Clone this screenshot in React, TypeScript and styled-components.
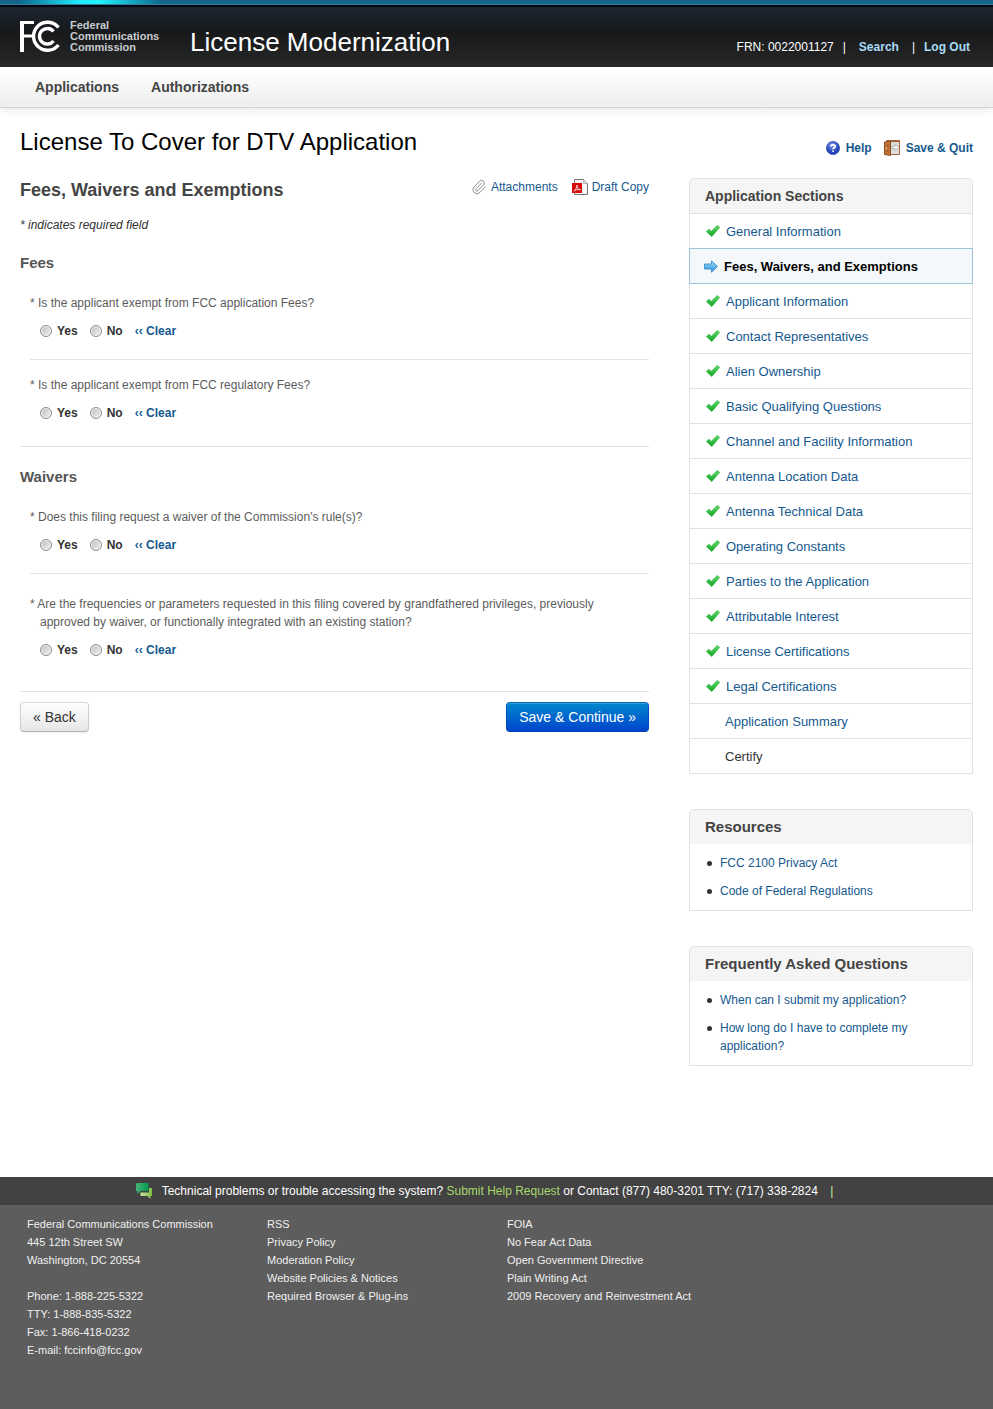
import React from "react";
import styled, { createGlobalStyle } from "styled-components";
import { Paperclip } from "lucide-react";

const GlobalStyle = createGlobalStyle`
  *, *::before, *::after { box-sizing: border-box; }
  body {
    margin: 0;
    background: #fff;
    color: #333;
    font: 12px/18px "Liberation Sans", Arial, sans-serif;
  }
  h1, h2, h3, p, ul, fieldset, legend { margin: 0; padding: 0; }
  fieldset { border: 0; min-width: 0; }
  ul { list-style: none; }
  a { color: #15598f; text-decoration: none; }
  svg { display: block; flex: none; }
`;

const Header = styled.header`
  position: relative;
  display: flex;
  align-items: flex-end;
  height: 67px;
  padding: 0 23px 0 20px;
  border-top: 4px solid #17638a;
  box-shadow: inset 0 1px #3579a3, inset 0 3px #02060f;
  background: linear-gradient(#1c2731, #17191b 45%, #272727);
  color: #fff;
`;

const Glow = styled.div`
  position: absolute;
  top: -4px;
  left: 20px;
  width: 140px;
  height: 4px;
  background: linear-gradient(90deg, #0d6a8e, #1ee9fa 42%, #22f4ff 56%, #0d6a8e);
`;

const LogoLink = styled.a`
  display: flex;
  gap: 10px;
  width: 170px;
  margin-bottom: 14px;
  color: #c9cccf;
  font: bold 11px/11px "Liberation Sans", Arial, sans-serif;
`;

const SiteTitle = styled.div`
  flex: 1;
  margin-bottom: 10px;
  font-size: 26px;
  line-height: 30px;
`;

const Account = styled.div`
  display: flex;
  margin-bottom: 11px;
  gap: 9px;
  a { color: #a9dcf7; font-weight: bold; }
  a:first-of-type { margin: 0 4px; }
`;

const Nav = styled.nav`
  display: flex;
  gap: 32px;
  height: 41px;
  padding: 0 35px;
  border-bottom: 1px solid #d2d2d2;
  box-shadow: 0 2px 8px rgba(0, 0, 0, 0.1);
  background: linear-gradient(#fff, #eee);
  a { color: #444; font-size: 14px; font-weight: bold; line-height: 40px; }
`;

const TitleRow = styled.div`
  display: flex;
  justify-content: space-between;
  align-items: flex-start;
  padding: 20px 20px 21px;
`;

const PageTitle = styled.h1`
  color: #000;
  font-size: 24px;
  font-weight: normal;
  line-height: 28px;
`;

const Actions = styled.div<{ $bold?: boolean }>`
  display: flex;
  align-items: flex-start;
  gap: ${(p) => (p.$bold ? 12 : 14)}px;
  margin-top: ${(p) => (p.$bold ? 11 : 0)}px;
  font-weight: ${(p) => (p.$bold ? "bold" : "normal")};
  a { display: flex; align-items: center; gap: ${(p) => (p.$bold ? 6 : 4)}px; }
`;

const Columns = styled.div`
  display: grid;
  grid-template-columns: minmax(0, 1fr) 284px;
  gap: 40px;
  padding: 0 20px;
`;

const FormHead = styled.div`
  display: flex;
  justify-content: space-between;
  h2 { color: #444; font-size: 18px; line-height: 24px; }
`;

const RequiredNote = styled.p`
  margin: 14px 0 20px;
  font-style: italic;
`;

const Group = styled.section<{ $last?: boolean }>`
  margin-bottom: ${(p) => (p.$last ? 10 : 21)}px;
  padding-bottom: ${(p) => (p.$last ? 32 : 24)}px;
  border-bottom: 1px solid #d7e4ee;
  h3 { margin-bottom: 22px; color: #555; font-size: 15px; line-height: 18px; }
`;

const Question = styled.div<{ $space?: number }>`
  margin-left: 10px;
  padding-top: ${(p) => p.$space ?? 0}px;
  & + & {
    margin-top: 19px;
    border-top: 1px solid #dde6ee;
  }
  legend {
    max-width: 590px;
    padding-left: 10px;
    text-indent: -10px;
    color: #5c5c5c;
  }
`;

const Options = styled.div`
  display: flex;
  align-items: center;
  gap: 12px;
  margin: 10px 0 0 10px;
  font-weight: bold;
  label { display: flex; align-items: center; gap: 5px; }
`;

const Radio = styled.input`
  appearance: none;
  width: 12px;
  height: 12px;
  margin: 0;
  border: 1px solid #8b8d8f;
  border-radius: 50%;
  box-shadow: inset 0 0 0 1px #f6f6f6;
  background: linear-gradient(135deg, #b9bcbe, #f4f4f4);
  &:checked { background: radial-gradient(#245f8d 35%, #eee 45%); }
`;

const ClearButton = styled.button`
  padding: 0;
  border: 0;
  background: none;
  color: #15598f;
  font: inherit;
`;

const ButtonRow = styled.div`
  display: flex;
  justify-content: space-between;
`;

const Button = styled.button<{ $primary?: boolean }>`
  height: 30px;
  padding: 0 12px;
  border: 1px solid;
  border-color: ${(p) => (p.$primary ? "#0667b7 #0450bd #0341b5" : "#dadada #cfcfcf #b3b3b3")};
  border-radius: 4px;
  box-shadow: ${(p) =>
    p.$primary ? "inset 0 1px rgba(255,255,255,0.2)" : "0 1px 2px rgba(0,0,0,0.08)"};
  background: ${(p) =>
    p.$primary ? "linear-gradient(#0088cc, #0044cc)" : "linear-gradient(#fff, #e6e6e6)"};
  color: ${(p) => (p.$primary ? "#fff" : "#333")};
  font: 14px/18px "Liberation Sans", Arial, sans-serif;
`;

const Sidebar = styled.aside`
  display: flex;
  flex-direction: column;
  gap: 35px;
`;

const Panel = styled.section`
  border: 1px solid #e1e1e1;
  border-radius: 5px 5px 0 0;
`;

const PanelTitle = styled.h3<{ $nav?: boolean }>`
  padding: 0 15px;
  border-radius: 4px 4px 0 0;
  background: #f5f5f5;
  color: #444;
  font-size: ${(p) => (p.$nav ? 14 : 15)}px;
  line-height: 34px;
`;

const Step = styled.li<{ $current?: boolean }>`
  display: flex;
  align-items: center;
  gap: 6px;
  height: ${(p) => (p.$current ? 36 : 35)}px;
  margin: ${(p) => (p.$current ? "0 -1px -1px" : 0)};
  padding-left: ${(p) => (p.$current ? 14 : 16)}px;
  border: ${(p) => (p.$current ? "1px solid #9cc5dc" : "0")};
  border-top: 1px solid ${(p) => (p.$current ? "#9cc5dc" : "#e1e1e1")};
  background: ${(p) => (p.$current ? "#f4f8fb" : "none")};
  position: relative;
  z-index: ${(p) => (p.$current ? 1 : 0)};
  font-size: 13px;
  > a, > span { padding-top: 2px; }
  a { color: ${(p) => (p.$current ? "#000" : "#15598f")}; font-weight: ${(p) => (p.$current ? "bold" : "normal")}; }
`;

const StepText = styled.span`
  padding-left: 19px;
`;

const LinkList = styled.ul`
  display: grid;
  gap: 10px;
  padding: 10px 15px;
  li { display: flex; gap: 8px; }
  li::before {
    content: "";
    flex: none;
    width: 5px;
    height: 5px;
    margin: 7px 0 0 2px;
    border-radius: 50%;
    background: #333;
  }
`;

const SupportBar = styled.div`
  display: flex;
  justify-content: center;
  align-items: center;
  gap: 10px;
  height: 28px;
  margin-top: 111px;
  padding-right: 24px;
  background: #424242;
  color: #fff;
  a { color: #a6d86e; }
  span { margin-left: 9px; color: #c5ec9a; }
`;

const Footer = styled.footer`
  display: grid;
  grid-template-columns: 240px 240px 1fr;
  padding: 10px 27px 50px;
  background: #5d5d5d;
  color: #f0f0f0;
  font-size: 11px;
  a { color: inherit; }
  address { font-style: normal; }
  p + p { margin-top: 18px; }
`;

const FccLogo = () => (
  <svg width="40" height="32" viewBox="0 0 40 32" fill="none" stroke="#fff" aria-hidden="true">
    <path d="M2 32V1" strokeWidth="4" />
    <path d="M2 2.500H14M2 16H12" strokeWidth="3" />
    <path d="M38.500 7.500A14 14 0 1 0 38.500 25" strokeWidth="3.400" />
    <path d="M33.500 11.500A7.800 7.800 0 1 0 33.500 21" strokeWidth="3.400" />
  </svg>
);

const HelpIcon = () => (
  <svg width="14" height="14" viewBox="0 0 14 14" aria-hidden="true">
    <defs>
      <radialGradient id="help" cx=".45" cy=".3">
        <stop offset="0" stopColor="#7da0ef" />
        <stop offset="1" stopColor="#2746bb" />
      </radialGradient>
    </defs>
    <circle cx="7" cy="7" r="6.600" fill="url(#help)" stroke="#2a46ae" strokeWidth=".7" />
    <path d="M4.800 5.400C4.900 3.300 9.300 3.300 9.200 5.400C9.200 6.700 7.100 6.700 7.100 8.300M7.100 9.400V11" fill="none" stroke="#fff" strokeWidth="1.700" />
  </svg>
);

const DoorIcon = () => (
  <svg width="16" height="16" viewBox="0 0 16 16" aria-hidden="true">
    <path d="M2.500.5H15.500V14.500H6" fill="#9b5a2d" stroke="#a8683a" />
    <path d="M7 2H15V14H7Z" fill="#dcdcdc" />
    <path d="M.5 2L6.500 1V15.500L.5 14.500Z" fill="#c4763c" stroke="#8e4d20" />
    <path d="M2.200 4L5 3.600V7.400H2.200ZM2.200 9.200H5V13L2.200 12.600Z" fill="#b0642e" />
    <circle cx="2.200" cy="8.300" r=".8" fill="#f5d28c" />
    <path d="M8 6.400H11V4.300L14.600 7.400L11 10.500V8.500H8Z" fill="#fff" stroke="#a2a2a2" strokeWidth=".7" />
  </svg>
);

const PdfIcon = () => (
  <svg width="16" height="16" viewBox="0 0 16 16" aria-hidden="true">
    <path d="M2.500.5H11.500L15.500 4.500V15.500H2.500Z" fill="#f7f7f7" stroke="#777" />
    <path d="M11.500.5V4.500H15.500" fill="#ddd" stroke="#aaa" strokeWidth=".7" />
    <path d="M0 4H10V14H0Z" fill="#d90a0a" />
    <path d="M2 12C4 10.500 5 8 5 6C5.200 9 6.500 10.500 8.500 10.800C6 10.200 4 10.600 2 12Z" fill="none" stroke="#fff" strokeWidth=".8" />
  </svg>
);

const CheckIcon = () => (
  <svg width="14" height="12" viewBox="0 0 14 12" aria-hidden="true">
    <defs>
      <linearGradient id="check" x1="0" y1="0" x2="0" y2="1">
        <stop offset="0" stopColor="#5fdc68" />
        <stop offset="1" stopColor="#12a326" />
      </linearGradient>
    </defs>
    <path d="M.4 6.600L2.900 4.200L5.300 6.300L11.300.4L13.600 2.400L5.800 11.600Z" fill="url(#check)" stroke="#2fb03e" strokeWidth=".7" strokeLinejoin="round" />
  </svg>
);

const ArrowIcon = () => (
  <svg width="14" height="13" viewBox="0 0 14 13" aria-hidden="true">
    <defs>
      <linearGradient id="arrow" x1="0" y1="0" x2="0" y2="1">
        <stop offset="0" stopColor="#a8dcf8" />
        <stop offset="1" stopColor="#2492df" />
      </linearGradient>
    </defs>
    <path d="M.5 4H7.500V.8L13.500 6.500L7.500 12.200V9H.5Z" fill="url(#arrow)" stroke="#398fc9" strokeWidth=".9" strokeLinejoin="round" />
  </svg>
);

const ChatIcon = () => (
  <svg width="16" height="16" viewBox="0 0 16 16" aria-hidden="true">
    <defs>
      <linearGradient id="chat">
        <stop offset="0" stopColor="#46b577" />
        <stop offset="1" stopColor="#009b4e" />
      </linearGradient>
      <linearGradient id="reply">
        <stop offset="0" stopColor="#cde3a0" />
        <stop offset="1" stopColor="#7cbf42" />
      </linearGradient>
    </defs>
    <path d="M13 5H16V13H14.500V16L11.500 13H4.500V9.500H13Z" fill="url(#reply)" />
    <path d="M1 0H11.500L12.500 1V8H4.500L1.500 11V8H0V1Z" fill="url(#chat)" />
  </svg>
);

const YesNo = ({ name, text, space }: { name: string; text: string; space?: number }) => (
  <Question $space={space}>
    <fieldset>
      <legend>* {text}</legend>
      <Options>
        <label><Radio type="radio" name={name} value="yes" />Yes</label>
        <label><Radio type="radio" name={name} value="no" />No</label>
        <ClearButton type="reset">‹‹ Clear</ClearButton>
      </Options>
    </fieldset>
  </Question>
);

const completed = [
  "Applicant Information", "Contact Representatives", "Alien Ownership",
  "Basic Qualifying Questions", "Channel and Facility Information",
  "Antenna Location Data", "Antenna Technical Data", "Operating Constants",
  "Parties to the Application", "Attributable Interest",
  "License Certifications", "Legal Certifications",
];

const DoneStep = ({ label }: { label: string }) => (
  <Step><CheckIcon /><a href="#">{label}</a></Step>
);

const FooterLinks = ({ items }: { items: string[] }) => (
  <ul>{items.map((t) => <li key={t}><a href="#">{t}</a></li>)}</ul>
);

export default function App() {
  return (
    <>
      <GlobalStyle />
      <Header>
        <Glow />
        <LogoLink href="#">
          <FccLogo />
          <span>Federal<br />Communications<br />Commission</span>
        </LogoLink>
        <SiteTitle>License Modernization</SiteTitle>
        <Account>
          FRN: 0022001127 <span>|</span> <a href="#">Search</a> <span>|</span> <a href="#">Log Out</a>
        </Account>
      </Header>
      <Nav>
        <a href="#">Applications</a>
        <a href="#">Authorizations</a>
      </Nav>
      <TitleRow>
        <PageTitle>License To Cover for DTV Application</PageTitle>
        <Actions $bold>
          <a href="#"><HelpIcon />Help</a>
          <a href="#"><DoorIcon />Save &amp; Quit</a>
        </Actions>
      </TitleRow>
      <Columns>
        <main>
          <FormHead>
            <h2>Fees, Waivers and Exemptions</h2>
            <Actions>
              <a href="#"><Paperclip size={16} strokeWidth={1.5} color="#8d8d8d" />Attachments</a>
              <a href="#"><PdfIcon />Draft Copy</a>
            </Actions>
          </FormHead>
          <RequiredNote>* indicates required field</RequiredNote>
          <form>
            <Group>
              <h3>Fees</h3>
              <YesNo name="application" text="Is the applicant exempt from FCC application Fees?" />
              <YesNo name="regulatory" space={16} text="Is the applicant exempt from FCC regulatory Fees?" />
            </Group>
            <Group $last>
              <h3>Waivers</h3>
              <YesNo name="waiver" text="Does this filing request a waiver of the Commission's rule(s)?" />
              <YesNo
                name="grandfathered"
                space={21}
                text="Are the frequencies or parameters requested in this filing covered by grandfathered privileges, previously approved by waiver, or functionally integrated with an existing station?"
              />
            </Group>
            <ButtonRow>
              <Button type="button">« Back</Button>
              <Button type="button" $primary>Save &amp; Continue »</Button>
            </ButtonRow>
          </form>
        </main>
        <Sidebar>
          <Panel>
            <PanelTitle $nav>Application Sections</PanelTitle>
            <ul>
              <DoneStep label="General Information" />
              <Step $current><ArrowIcon /><a href="#">Fees, Waivers, and Exemptions</a></Step>
              {completed.map((label) => <DoneStep key={label} label={label} />)}
              <Step><StepText><a href="#">Application Summary</a></StepText></Step>
              <Step><StepText>Certify</StepText></Step>
            </ul>
          </Panel>
          <Panel>
            <PanelTitle>Resources</PanelTitle>
            <LinkList>
              <li><a href="#">FCC 2100 Privacy Act</a></li>
              <li><a href="#">Code of Federal Regulations</a></li>
            </LinkList>
          </Panel>
          <Panel>
            <PanelTitle>Frequently Asked Questions</PanelTitle>
            <LinkList>
              <li><a href="#">When can I submit my application?</a></li>
              <li><a href="#">How long do I have to complete my application?</a></li>
            </LinkList>
          </Panel>
        </Sidebar>
      </Columns>
      <SupportBar>
        <ChatIcon />
        <p>
          Technical problems or trouble accessing the system? <a href="#">Submit Help Request</a> or
          Contact (877) 480-3201 TTY: (717) 338-2824 <span>|</span>
        </p>
      </SupportBar>
      <Footer>
        <address>
          <p>Federal Communications Commission<br />445 12th Street SW<br />Washington, DC 20554</p>
          <p>
            Phone: 1-888-225-5322<br />TTY: 1-888-835-5322<br />Fax: 1-866-418-0232<br />
            E-mail: <a href="#">fccinfo@fcc.gov</a>
          </p>
        </address>
        <FooterLinks items={["RSS", "Privacy Policy", "Moderation Policy", "Website Policies & Notices", "Required Browser & Plug-ins"]} />
        <FooterLinks items={["FOIA", "No Fear Act Data", "Open Government Directive", "Plain Writing Act", "2009 Recovery and Reinvestment Act"]} />
      </Footer>
    </>
  );
}
